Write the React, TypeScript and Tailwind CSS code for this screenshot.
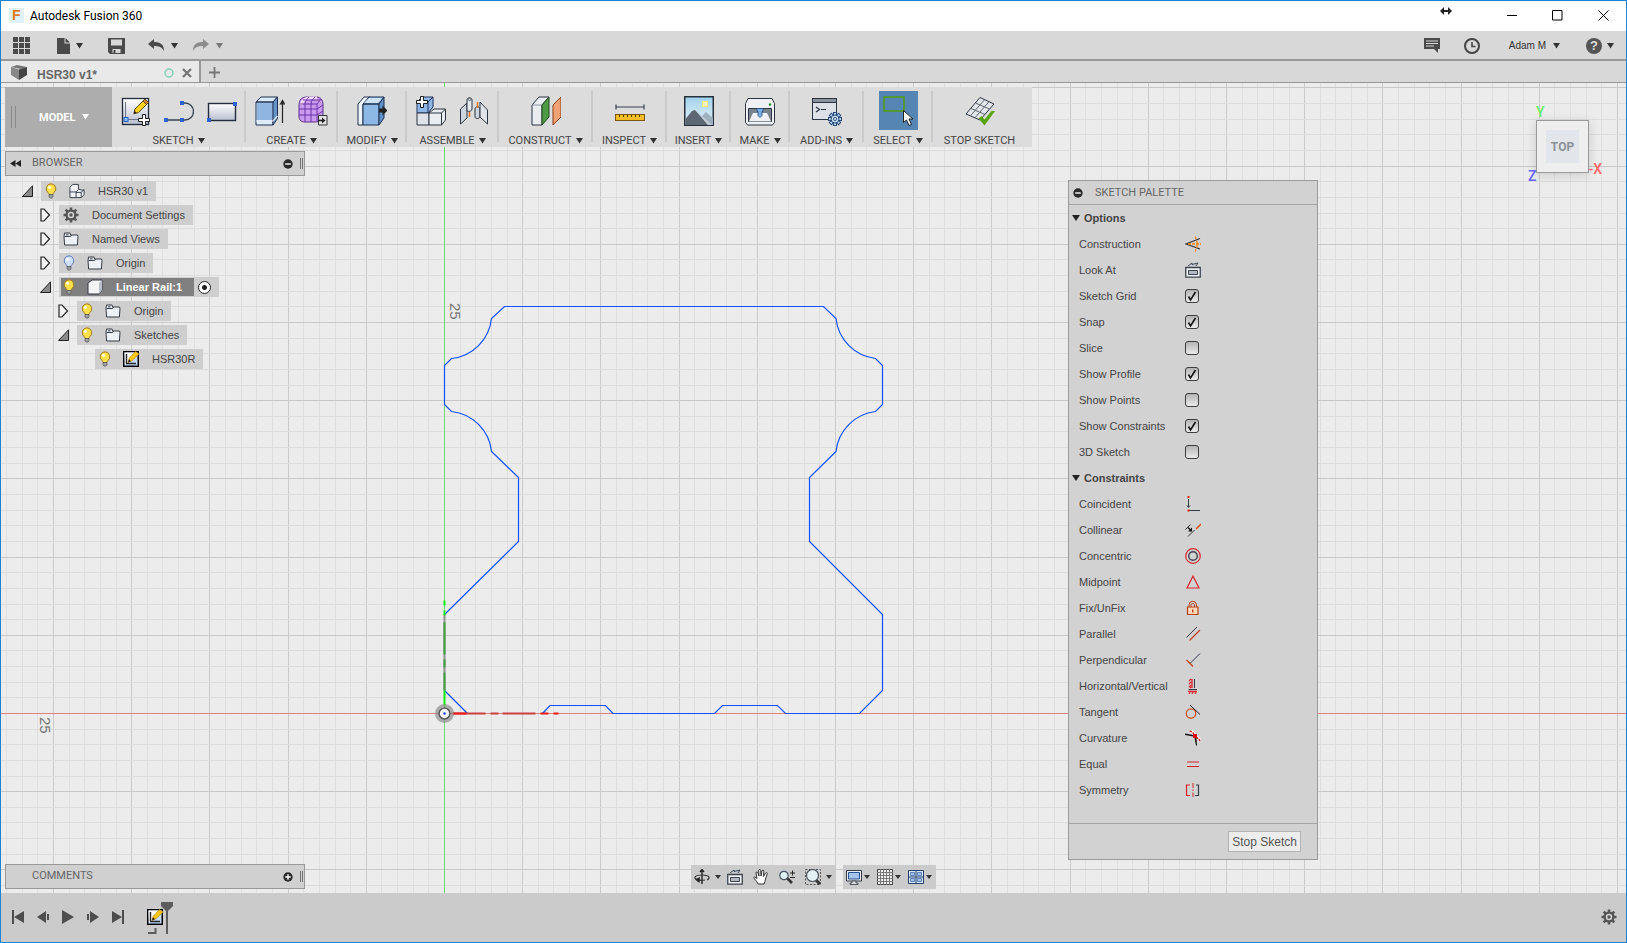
import { useState, type ReactNode } from "react";

const UI = "font-['Liberation_Sans',Arial,sans-serif]";
const CONDENSED = "font-['Roboto','Liberation_Sans',sans-serif]";

/* ---------- small shared glyphs ---------- */

function Caret({ className = "text-[#333]" }: { className?: string }) {
  return (
    <svg width="7" height="6" viewBox="0 0 7 6" className={className} aria-hidden="true">
      <path d="M0 0h7L3.5 5.5z" fill="currentColor" />
    </svg>
  );
}

function Bulb({ off = false }: { off?: boolean }) {
  return (
    <svg width="12" height="16" viewBox="0 0 12 16" aria-hidden="true">
      <path
        d="M6 .8a4.9 4.9 0 0 0-3 8.700c.8.700 1 1.200 1 2h4c0-.8.2-1.300 1-2A4.900 4.900 0 0 0 6 .8z"
        fill={off ? "#cfe0fb" : "#ffe04a"}
        stroke={off ? "#5f7fc0" : "#a87b1c"}
      />
      <circle cx="4.500" cy="4.300" r="1.600" fill="#fff" opacity=".85" />
      <path d="M4 11.500h4v2.300L7 15H5l-1-1.200z" fill="#9aa0a8" stroke="#555" strokeWidth=".7" />
    </svg>
  );
}

function Folder() {
  return (
    <svg width="16" height="14" viewBox="0 0 16 14" aria-hidden="true">
      <path d="M1 4.500 1.500 1h5.500l.7 2H14.500l.5 1.500-.6 8.500H1.600z" fill="#eef1f5" stroke="#333b47" strokeLinejoin="round" />
      <path d="M1.500 4.500h6L8.500 3M3 2.800h2.500" fill="none" stroke="#333b47" />
    </svg>
  );
}

function Gear({ size = 16 }: { size?: number }) {
  return (
    <svg width={size} height={size} viewBox="0 0 16 16" aria-hidden="true">
      <g stroke="#555" strokeWidth="2.600">
        <path d="M8 .5v15M.5 8h15M2.700 2.700l10.600 10.600M13.300 2.700 2.700 13.300" />
      </g>
      <circle cx="8" cy="8" r="5.600" fill="#555" />
      <circle cx="8" cy="8" r="3.200" fill="#d4d4d4" />
      <circle cx="8" cy="8" r="1.700" fill="#555" />
    </svg>
  );
}

function SketchFeature() {
  return (
    <svg width="16" height="16" viewBox="0 0 16 16" aria-hidden="true">
      <rect x=".75" y=".75" width="14.500" height="14.500" fill="#c4ddf8" stroke="#000" strokeWidth="1.500" />
      <path d="M1.500 1.500h13L2 14.500z" fill="#fff" />
      <path d="M3.500 3v9.500H13" fill="none" stroke="#222" strokeWidth="1.400" />
      <path d="m6 7.500 6.500-7L16 3 9 9.700 5 11.500z" fill="#ffc916" stroke="#b98412" strokeWidth=".7" />
      <path d="m5 11.500 1-3.200 2 2z" fill="#222" />
    </svg>
  );
}

function RoundSign({ plus = false }: { plus?: boolean }) {
  return (
    <svg width="10" height="10" viewBox="0 0 10 10" aria-hidden="true">
      <circle cx="5" cy="5" r="4.700" fill="#2b2b2b" />
      <path d={plus ? "M2.200 5h5.600M5 2.200v5.600" : "M2.200 5h5.600"} stroke="#fff" strokeWidth="1.400" />
    </svg>
  );
}

/* ---------- ribbon icons, 30 x 30 ---------- */

function Icon30({ children }: { children: ReactNode }) {
  return (
    <svg width="30" height="30" viewBox="0 0 30 30" fill="none" aria-hidden="true">
      {children}
    </svg>
  );
}

const CreateSketchIcon = (
  <Icon30>
    <rect x="1.500" y="2.500" width="26" height="26" fill="url(#steel)" stroke="#222c3a" strokeWidth="1.300" />
    <path d="M4.500 6v17.500H20" stroke="#6d7785" />
    <rect x="3" y="21.500" width="4" height="4" fill="#8fc0ff" stroke="#1f5fc4" />
    <path d="m14 13 9.500-9.500 3.500 3.500-9.500 9.500-4.700 1.300z" fill="#ffd21f" stroke="#5c4715" />
    <path d="m22 5 3.500 3.500L27.500 6.500 24 3z" fill="#d7873a" stroke="#5c4715" />
    <path d="m12.800 17.800.8-3 2.200 2.200z" fill="#222" />
    <path d="M21.500 18.500h3v4h4v3h-4v4h-3v-4h-4v-3h4z" fill="#fff" stroke="#1c1c1c" />
  </Icon30>
);

const PolylineIcon = (
  <Icon30>
    <path d="M2 24h16M17 7h4a8.500 8.500 0 0 1 0 17h-4" stroke="#39414d" strokeWidth="1.300" />
    <path d="M0 22h4v4H0zM16 22h4v4h-4zM16 5h4v4h-4z" fill="#2f62cf" />
  </Icon30>
);

const RectangleIcon = (
  <Icon30>
    <rect x="1.500" y="7.500" width="27" height="17" fill="url(#steel)" stroke="#222c3a" strokeWidth="1.400" />
    <path d="M0 22h4v4H0zM26 6h4v4h-4z" fill="#2f62cf" />
  </Icon30>
);

const ExtrudeIcon = (
  <Icon30>
    <path d="M1 6 6 1h16.500L18 6zM1 6h17v23H1z" fill="#dcebfa" stroke="#1f3050" strokeLinejoin="round" />
    <path d="M2 7h15.500v17H2z" fill="#8fb6e0" />
    <path d="M18 6l4.500-5v21.500L18 29z" fill="#6494c8" stroke="#1f3050" strokeLinejoin="round" />
    <path d="M1 25h17l4.500-5" stroke="#e8eef5" strokeWidth="1.200" />
    <path d="M27.500 27V5M25.500 8l2-3.500 2 3.500z" stroke="#222" strokeWidth="1.200" />
  </Icon30>
);

const FormIcon = (
  <Icon30>
    <path d="M1 10C1 3 4 1 9 1h9c5 0 7 3 7 8v9c0 5-3 8-8 8H7c-4 0-6-2-6-6z" fill="#c99af0" stroke="#5c2c90" />
    <path d="M3 9C5 3 8 2 13 2h6" stroke="#f1dcff" strokeWidth="3" />
    <path d="M1 13h18M1 19h18M2 8h17M7 8v18M13 8v18M19 8v17M7 8c0-3 2-5 4-7M13 8c0-3 2-5 4-7M19 8l4-5M19 13l6-4M19 19l6-4M5 4h17" stroke="#6a35a5" />
    <path d="M20.500 19.500h8.500v9.500h-8.500z" fill="#e4e4e4" stroke="#333" />
    <path d="M20 24.500h5" stroke="#222" strokeWidth="1.600" />
    <path d="m24 21.500 3.500 3-3.500 3z" fill="#222" />
  </Icon30>
);

const PressPullIcon = (
  <Icon30>
    <path d="M1 8 7 1h6L6 8v21H1z" fill="#edf3fa" stroke="#1f3050" strokeLinejoin="round" />
    <path d="M6 8l6-7h15l-5 7zM6 8h16v21H6z" fill="#8db7e4" stroke="#1f3050" strokeLinejoin="round" />
    <path d="m7 7 5-5h13l-4 5z" fill="#d0e3f7" />
    <path d="m22 8 5-7v21l-5 7z" fill="#5f90c6" stroke="#1f3050" strokeLinejoin="round" />
    <path d="M22 12.500h3.500v-3l5 5-5 5v-3H22z" fill="#222" />
  </Icon30>
);

const NewComponentIcon = (
  <Icon30>
    <path d="M1 6 6 1h11v10l-5 6H1z" fill="#8fb7e5" stroke="#1f3560" />
    <path d="M12 6v11M12 6l5-5" stroke="#1f3560" />
    <path d="M1 17h12v12H1z" fill="#dfe3e9" stroke="#2b3442" />
    <path d="m13 17 5-4h11.500v11l-4 5H13zM13 17h12.500v12M25.500 17l4-4" fill="#e9ecf1" stroke="#2b3442" />
    <path d="M4.500.5h3v4h4v3h-4v4h-3v-4h-4v-3h4z" fill="#fff" stroke="#1c1c1c" />
  </Icon30>
);

const JointIcon = (
  <Icon30>
    <path d="M1.500 13 8 7v15l-6.500 6z" fill="#cfd5de" stroke="#2b3442" strokeLinejoin="round" />
    <path d="M8 4c0-3 5-3 5 0v9c0 2-3 3-5 2z" fill="#e6eaef" stroke="#2b3442" />
    <circle cx="10.500" cy="3.500" r="1.200" fill="#fff" stroke="#2b3442" strokeWidth=".7" />
    <path d="M16 13c0-3 5-3 5 0v8c-1 2-5 2-5 0z" fill="#cfd5de" stroke="#2b3442" />
    <path d="m21 6 7.500 8v14L21 21z" fill="#dfe3ea" stroke="#2b3442" strokeLinejoin="round" />
    <path d="M10.500 16v5M18.500 6v6" stroke="#f07818" strokeWidth="1.600" />
  </Icon30>
);

const ConstructIcon = (
  <Icon30>
    <path d="m1 9 7-8h10l-7 8v20H1z" fill="#e8ebf0" stroke="#2b3442" strokeLinejoin="round" />
    <path d="M1 9h10" stroke="#9099a6" />
    <path d="m11 9 7-8v20l-7 8z" fill="#4f9a44" stroke="#1f4a1c" strokeLinejoin="round" />
    <path d="m22 9 8-8v20l-8 8z" fill="#f0a274" stroke="#8d3f16" strokeLinejoin="round" />
  </Icon30>
);

const InspectIcon = (
  <Icon30>
    <path d="M1 11h28M1 8.500v5M29 8.500v5" stroke="#39414d" strokeWidth="1.200" />
    <rect x=".5" y="18.500" width="29" height="6" fill="#f5bd2a" stroke="#7a5a12" />
    <path d="M4.500 19v2M8.500 19v2M12.500 19v2M16.500 19v2M20.500 19v2M24.500 19v2" stroke="#5c430d" />
  </Icon30>
);

const InsertIcon = (
  <Icon30>
    <rect x=".75" y=".75" width="28.500" height="28.500" fill="url(#sky)" stroke="#26303c" strokeWidth="1.500" />
    <path d="m14 24 8-8 7 6v7H12z" fill="#9eb0bf" />
    <path d="M1.500 23 8 15l3-1 4 4 9 11H1.500z" fill="#5d6674" />
    <path d="m11 14 13 15h4L16 18z" fill="#c3ccd6" />
    <rect x="18.500" y="5.500" width="5" height="5" fill="#fff6b8" stroke="#ffe98a" />
  </Icon30>
);

const MakeIcon = (
  <Icon30>
    <path d="M3 2.500h24l2.500 5v19l-2 2.500h-25L.5 26.500v-19z" fill="#eef0f3" stroke="#2b3442" strokeLinejoin="round" />
    <circle cx="25" cy="8.500" r="1.200" fill="#1c8a1c" />
    <path d="M3.500 12.500h23v13h-23z" fill="#7b838f" stroke="#2b3442" />
    <path d="m8 17-4 8.500h22L22 17z" fill="#eef0f3" />
    <path d="M12 12.500h6v3h-1v4l-2 2-2-2v-4h-1z" fill="#78aee8" stroke="#244c80" strokeWidth=".8" />
  </Icon30>
);

const AddInsIcon = (
  <Icon30>
    <rect x=".5" y="2.500" width="24" height="21" fill="#dce1e8" stroke="#2b3442" />
    <path d="M.5 2.500h24v4H.5z" fill="#8a929e" stroke="#2b3442" />
    <path d="m4 11 3.500 2.500L4 16M9 13.500h5" stroke="#2b3442" strokeWidth="1.200" />
    <g stroke="#27497a" strokeWidth="4">
      <path d="M23 16v14M16 23h14M18 18l10 10M28 18 18 28" />
    </g>
    <g stroke="#c4d9f2" strokeWidth="2">
      <path d="M23 17v12M17 23h12M18.700 18.700l8.600 8.600M27.300 18.700l-8.600 8.600" />
    </g>
    <circle cx="23" cy="23" r="4" fill="#c4d9f2" stroke="#27497a" />
    <circle cx="23" cy="23" r="1.500" fill="#fff" stroke="#27497a" />
  </Icon30>
);

const SelectIcon = (
  <Icon30>
    <rect x="1" y="1" width="20" height="14" stroke="#4f9d0c" strokeWidth="1.500" />
    <path d="M20.500 14.500v12l3-2.500 2.500 5.500 2.500-1-2.500-5.500h4z" fill="#f4f4f4" stroke="#222" />
  </Icon30>
);

const StopSketchIcon = (
  <Icon30>
    <path d="M15 1.500 29 8 15 24 1 18z" fill="#e3e6eb" stroke="#2b3442" strokeLinejoin="round" />
    <path d="m10.500 7 14 6M6 12.500l14 6M19.500 3.700l-14 16M24 5.700l-14 16" stroke="#5e6774" />
    <path d="m13.500 22.500 3-2.500 3 3.500 7-8.500h3.500L19.500 29.500z" fill="#59a30c" />
  </Icon30>
);

type RibbonGroup = { label: string; width: string; icons: ReactNode[]; menu?: boolean; active?: boolean };

const ribbon: RibbonGroup[] = [
  { label: "SKETCH", width: "w-[134px]", icons: [CreateSketchIcon, PolylineIcon, RectangleIcon] },
  { label: "CREATE", width: "w-[92px]", icons: [ExtrudeIcon, FormIcon] },
  { label: "MODIFY", width: "w-[69px]", icons: [PressPullIcon] },
  { label: "ASSEMBLE", width: "w-[92px]", icons: [NewComponentIcon, JointIcon] },
  { label: "CONSTRUCT", width: "w-[94px]", icons: [ConstructIcon] },
  { label: "INSPECT", width: "w-[74px]", icons: [InspectIcon] },
  { label: "INSERT", width: "w-[64px]", icons: [InsertIcon] },
  { label: "MAKE", width: "w-[59px]", icons: [MakeIcon] },
  { label: "ADD-INS", width: "w-[74px]", icons: [AddInsIcon] },
  { label: "SELECT", width: "w-[69px]", icons: [SelectIcon], active: true },
  { label: "STOP SKETCH", width: "w-[99px]", icons: [StopSketchIcon], menu: false },
];

function Ribbon() {
  return (
    <div className="flex h-[60px] w-fit bg-[#dcdcdc]">
      <button className={`flex w-[107px] items-center bg-[#adadad] pl-[6px] text-[11px] font-bold text-white ${CONDENSED}`}>
        <span className="h-[22px] w-[5px] border-x border-[#8a8a8a]" />
        <span className="ml-[23px] pt-[2px]">MODEL</span>
        <span className="ml-[6px]">
          <Caret className="text-white" />
        </span>
      </button>
      {ribbon.map((group, i) => (
        <div key={group.label} className={`flex ${group.width}`}>
          <div className={`flex flex-1 flex-col items-center ${group.menu === false ? "pr-[6px]" : "pl-[1px]"}`}>
            <div className="flex h-[47px] items-center gap-[13px]">
              {group.icons.map((icon, n) => (
                <button
                  key={n}
                  aria-label={group.label}
                  className={group.active ? "flex h-[39px] w-[39px] items-center justify-center bg-[#5586b3]" : ""}
                >
                  {icon}
                </button>
              ))}
            </div>
            <button className={`flex h-[13px] items-center gap-[4px] text-[11px] leading-[13px] text-[#444] ${CONDENSED}`}>
              {group.label}
              {group.menu !== false && <Caret />}
            </button>
          </div>
          {i < ribbon.length - 1 && <div className="mt-[4px] h-[51px] w-[2px] bg-[#cacaca]" />}
        </div>
      ))}
    </div>
  );
}

/* ---------- title, quick access and tab bars ---------- */

function TitleBar() {
  return (
    <header className="flex h-[30px] shrink-0 items-center bg-white pb-[2px] pl-[8px]">
      <svg width="15" height="15" viewBox="0 0 15 15" aria-hidden="true">
        <rect width="15" height="15" fill="#dff1f6" />
        <text x="3" y="12" fontSize="14" fontWeight="900" fill="#e07b1f" fontFamily="Liberation Sans">
          F
        </text>
      </svg>
      <h1 className={`ml-[6px] pt-[1px] text-[12px] text-black ${CONDENSED}`}>Autodesk Fusion 360</h1>
      <div className="ml-auto flex items-center pr-[17px]">
        <svg width="12" height="8" viewBox="0 0 12 8" className="mb-[8px]" aria-hidden="true">
          <path d="M0 4l4-4v3h4V0l4 4-4 4V5H4v3z" fill="#222" />
        </svg>
        <button aria-label="Minimize" className="ml-[55px]">
          <svg width="11" height="11" viewBox="0 0 11 11">
            <path d="M0 5.500h10" stroke="#000" />
          </svg>
        </button>
        <button aria-label="Maximize" className="ml-[34px]">
          <svg width="11" height="11" viewBox="0 0 11 11">
            <path d="M.5.5h9.500v9.500H.5z" fill="none" stroke="#000" />
          </svg>
        </button>
        <button aria-label="Close" className="ml-[35px]">
          <svg width="11" height="11" viewBox="0 0 11 11">
            <path d="m.5.500 10 10m0-10-10 10" stroke="#000" />
          </svg>
        </button>
      </div>
    </header>
  );
}

function QuickAccess() {
  return (
    <nav className="flex h-[30px] shrink-0 items-center border-b-2 border-[#989898] bg-[#d8d8d8] pl-[12px] pt-[1px] text-[#444]">
      <button aria-label="Data panel">
        <svg width="17" height="17" viewBox="0 0 17 17" fill="#4a4a4a">
          <path d="M0 0h5v5H0zM6 0h5v5H6zM12 0h5v5h-5zM0 6h5v5H0zM6 6h5v5H6zM12 6h5v5h-5zM0 12h5v5H0zM6 12h5v5H6zM12 12h5v5h-5z" />
        </svg>
      </button>
      <button aria-label="File" className="ml-[27px] flex items-center gap-[6px]">
        <svg width="13" height="16" viewBox="0 0 13 16" fill="#4a4a4a">
          <path d="M0 0h7.500v5.500H13V16H0zM8.500 0 13 4.500H8.500z" />
        </svg>
        <Caret />
      </button>
      <button aria-label="Save" className="ml-[25px]">
        <svg width="17" height="16" viewBox="0 0 17 16">
          <path d="M0 0h17v16H2l-2-2z" fill="#4a4a4a" />
          <path d="M3 1.500h11v6H3zM4.500 11h8v4h-8z" fill="#d8d8d8" />
          <path d="M5.500 12h2v3h-2z" fill="#4a4a4a" />
        </svg>
      </button>
      <button aria-label="Undo" className="ml-[23px] flex items-center gap-[7px]">
        <svg width="16" height="13" viewBox="0 0 16 13">
          <path d="M0 5 6 0v3c6 0 10 2 10 9-2-4-5-5-10-5v3z" fill="#4a4a4a" />
        </svg>
        <Caret />
      </button>
      <button aria-label="Redo" className="ml-[15px] flex items-center gap-[7px]">
        <svg width="16" height="13" viewBox="0 0 16 13">
          <path d="M16 5 10 0v3C4 3 0 5 0 12c2-4 5-5 10-5v3z" fill="#8c8c8c" />
        </svg>
        <Caret className="text-[#777]" />
      </button>

      <div className={`ml-auto flex items-center pr-[12px] ${UI}`}>
        <button aria-label="Comments">
          <svg width="16" height="15" viewBox="0 0 16 15">
            <path d="M0 0h16v11h-2v4l-4-4H0z" fill="#4a4a4a" />
            <path d="M2 3h12M2 5.500h12M2 8h8" stroke="#d8d8d8" strokeWidth="1.200" />
          </svg>
        </button>
        <button aria-label="Job status" className="ml-[24px]">
          <svg width="16" height="16" viewBox="0 0 16 16" fill="none" stroke="#444">
            <circle cx="8" cy="8" r="7" strokeWidth="2" />
            <path d="M8 4v4.500h3.500" strokeWidth="1.600" />
          </svg>
        </button>
        <button className="ml-[29px] flex items-center gap-[7px] text-[10px] text-[#333]">
          Adam M
          <Caret />
        </button>
        <button aria-label="Help" className="ml-[26px] flex items-center gap-[5px]">
          <span className="flex h-[16px] w-[16px] items-center justify-center rounded-full bg-[#555] text-[13px] font-bold text-[#ddd]">
            ?
          </span>
          <Caret />
        </button>
      </div>
    </nav>
  );
}

function TabBar() {
  return (
    <div className="flex h-[22px] shrink-0 border-b border-[#989898] bg-[#d8d8d8]">
      <div className={`flex w-[200px] items-center border-r-2 border-[#989898] bg-[#e9e9e9] pl-[10px] pr-[7px] pt-[2px] ${UI}`}>
        <svg width="16" height="15" viewBox="0 0 16 15" aria-hidden="true">
          <path d="M0 2 6 0l10 2-6 2z" fill="#777" />
          <path d="M0 2l8 2.500V15L0 10z" fill="#888" />
          <path d="M8 4.500 16 2v8l-8 5z" fill="#444" />
        </svg>
        <span className="ml-[10px] pt-[4px] text-[12px] leading-[14px] font-bold text-[#666]">HSR30 v1*</span>
        <svg width="10" height="10" viewBox="0 0 10 10" className="ml-auto" aria-hidden="true">
          <circle cx="5" cy="5" r="4" fill="none" stroke="#7fd0b4" strokeWidth="1.400" />
        </svg>
        <button aria-label="Close tab" className="ml-[8px]">
          <svg width="10" height="10" viewBox="0 0 10 10">
            <path d="m1 1 8 8m0-8L1 9" stroke="#777" strokeWidth="2.400" />
          </svg>
        </button>
      </div>
      <button aria-label="New tab" className="ml-[8px] pt-[2px]">
        <svg width="11" height="11" viewBox="0 0 11 11">
          <path d="M5.500 0v11M0 5.500h11" stroke="#777" strokeWidth="1.800" />
        </svg>
      </button>
    </div>
  );
}

/* ---------- drawing canvas ---------- */

// grid pitch of one unit; every fifth line is a major one
const PITCH = 15.640;
const ORIGIN = { x: 443, y: 630 };
const at = (origin: number, k: number) => Math.round(origin + k * PITCH) + 0.5;
const columns = Array.from({ length: 106 }, (_, i) => i - 28);
const rows = Array.from({ length: 58 }, (_, i) => i - 40);

function Canvas() {
  return (
    <svg className="absolute inset-0 h-full w-full" aria-label="Sketch canvas">
      <defs>
        <linearGradient id="steel" x1="0" y1="0" x2="0" y2="1">
          <stop offset="0" stopColor="#fff" />
          <stop offset="1" stopColor="#b9bfd0" />
        </linearGradient>
        <linearGradient id="sky" x1="0" y1="0" x2="0" y2="1">
          <stop offset="0" stopColor="#9fd0ec" />
          <stop offset="1" stopColor="#eaf5fa" />
        </linearGradient>
      </defs>
      <rect width="100%" height="100%" fill="#ececec" />
      {columns.map((k) => (
        <line key={k} x1={at(ORIGIN.x, k)} x2={at(ORIGIN.x, k)} y1="0" y2="100%" stroke={k % 5 ? "#dfdfdf" : "#cacaca"} />
      ))}
      {rows.map((k) => (
        <line key={k} y1={at(ORIGIN.y, k)} y2={at(ORIGIN.y, k)} x1="0" x2="100%" stroke={k % 5 ? "#dddddd" : "#c8c8c8"} />
      ))}
      <line x1="0" x2="100%" y1="630.5" y2="630.5" stroke="#e08080" />
      <line x1="443.500" x2="443.500" y1="0" y2="100%" stroke="#6fdc6f" />

      <g fill="#777" fontSize="15" fontFamily="Liberation Sans">
        <text transform="translate(449 220) rotate(90)">25</text>
        <text transform="translate(39 634) rotate(90)">25</text>
      </g>

      <g transform="translate(443.500 630.500)" fill="none">
        <path
          d="M98 0 105.500-8H161l7.500 8H270l8-8h55l8 8h74l23-23v-76l-73-73v-64l26.500-26A45 45 0 0 1 431-302l7-7v-39l-7-7A45 45 0 0 1 391.500-395L379-407H60L47-395A45 45 0 0 1 7-355l-7 7v39l7 7A45 45 0 0 1 47-262l27 26v64L0-99M0-23 23 0"
          stroke="#0d50ff"
          strokeWidth="1.200"
        />
        <path d="M0-23v-76" stroke="#8a938a" strokeWidth="2" />
        <path d="M0-23v-18m0-5v-8m0-5v-32" stroke="#3f9f3f" strokeWidth="2" />
        <path d="M0-8v-15M0-98v-5m0-5v-5" stroke="#0cf00c" strokeWidth="2" />
        <path d="M8 0h33m5 0h8m4 0h33" stroke="#c84040" strokeWidth="2" />
        <path d="M8 0h14m74 0h8m5 0h5" stroke="#f01818" strokeWidth="2" />
        <circle r="8" stroke="#888" strokeOpacity=".65" strokeWidth="3" />
        <circle r="5.500" fill="#f4f4f4" stroke="#555" strokeWidth="1.600" />
        <circle r="1.200" fill="#1a3cf5" />
      </g>
    </svg>
  );
}

function ViewCube() {
  return (
    <div className={`absolute right-[37px] top-[37px] h-[53px] w-[53px] text-[14px] leading-[16px] ${CONDENSED}`}>
      <button className="flex h-full w-full items-center justify-center border border-[#9a9a9a] bg-[#eeeeee] shadow-[0_2px_10px_rgba(0,0,0,0.15)]">
        <span className="flex h-[33px] w-[33px] items-center justify-center bg-[#e2e5e9] text-[12px] font-bold text-[#8c9196]">TOP</span>
      </button>
      <span className="absolute -top-[16px] left-0 font-medium text-[#66f066]">Y</span>
      <span className="absolute -right-[13px] top-[41px] font-medium text-[#f66]">-X</span>
      <span className="absolute -left-[8px] top-[48px] font-medium text-[#66f]">Z</span>
    </div>
  );
}

/* ---------- browser tree ---------- */

function Expander({ open }: { open: boolean }) {
  return (
    <button aria-label={open ? "Collapse" : "Expand"} className="flex w-[20px] shrink-0 justify-start pl-[1px]">
      {open ? (
        <svg width="12" height="12" viewBox="0 0 12 12">
          <path d="M10.500 .8v10.700H.5z" fill="#8a8a8a" stroke="#222" />
        </svg>
      ) : (
        <svg width="12" height="14" viewBox="0 0 12 14">
          <path d="M1 1h3l5.500 6L4 13H1z" fill="#f4f4f4" stroke="#222" strokeWidth="1.200" />
        </svg>
      )}
    </button>
  );
}

const AssemblyIcon = (
  <svg width="17" height="16" viewBox="0 0 17 16" aria-hidden="true">
    <path d="m1 4 3-3h6v5l3 1h3v5l-3 3H1z" fill="#f0f2f5" stroke="#333b47" strokeLinejoin="round" />
    <path d="M1 9h6.500v6M7.500 9 10 6.500M7.500 9.500H13V15M13 9.500l3-3" fill="none" stroke="#333b47" />
  </svg>
);

const BodyIcon = (
  <svg width="16" height="16" viewBox="0 0 16 16" aria-hidden="true">
    <path d="m1 4 4-3h10v10l-3 4H1z" fill="#f2f4f6" stroke="#333b47" strokeLinejoin="round" />
    <path d="M12 15V4l3-3v10z" fill="#b9c0ca" />
  </svg>
);

type Node = {
  label: string;
  indent: string;
  open?: boolean;
  bulb?: "on" | "off";
  icon: ReactNode;
  active?: boolean;
};

const tree: Node[] = [
  { label: "HSR30 v1", indent: "pl-[16px]", open: true, bulb: "on", icon: AssemblyIcon },
  { label: "Document Settings", indent: "pl-[34px]", open: false, icon: <Gear /> },
  { label: "Named Views", indent: "pl-[34px]", open: false, icon: <Folder /> },
  { label: "Origin", indent: "pl-[34px]", open: false, bulb: "off", icon: <Folder /> },
  { label: "Linear Rail:1", indent: "pl-[34px]", open: true, bulb: "on", icon: BodyIcon, active: true },
  { label: "Origin", indent: "pl-[52px]", open: false, bulb: "on", icon: <Folder /> },
  { label: "Sketches", indent: "pl-[52px]", open: true, bulb: "on", icon: <Folder /> },
  { label: "HSR30R", indent: "pl-[90px]", bulb: "on", icon: <SketchFeature /> },
];

function TreeRow({ node }: { node: Node }) {
  return (
    <li className={`flex h-[20px] items-center ${node.indent}`}>
      {node.open !== undefined && <Expander open={node.open} />}
      <div className={`flex h-full items-center bg-[#cecece] ${node.active ? "pl-[2px]" : ""}`}>
        <button
          className={`flex items-center text-[11px] ${
            node.active ? "h-[18px] bg-[#808080] pl-[2px] pr-[12px] font-bold text-white" : "h-full pl-[4px] pr-[8px] text-[#444]"
          }`}
        >
          {node.bulb && (
            <span className="mr-[12px]">
              <Bulb off={node.bulb === "off"} />
            </span>
          )}
          <span className="mr-[13px] flex w-[16px] justify-center">{node.icon}</span>
          {node.label}
        </button>
        {node.active && (
          <label className="flex w-[25px] items-center pl-[4px]">
            <input
              type="radio"
              defaultChecked
              aria-label="Activate component"
              className="h-[13px] w-[13px] appearance-none rounded-full border border-[#222] bg-[radial-gradient(circle,#222_2px,#fff_3px)]"
            />
          </label>
        )}
      </div>
    </li>
  );
}

function PanelBar({ title, plus = false }: { title: string; plus?: boolean }) {
  return (
    <div className="flex h-[25px] w-[300px] items-center border border-[#999] bg-[#d0d0d0] pl-[4px] pr-[1px]">
      <span className="w-[22px]">
        {!plus && (
          <button aria-label="Hide browser" className="block">
            <svg width="11" height="7" viewBox="0 0 11 7">
              <path d="M5.500 0v7L0 3.500zM11 0v7L5.500 3.500z" fill="#222" />
            </svg>
          </button>
        )}
      </span>
      <h2 className={`text-[11px] text-[#666] ${CONDENSED}`}>{title}</h2>
      <button aria-label={plus ? "Expand comments" : "Collapse browser"} className="ml-auto">
        <RoundSign plus={plus} />
      </button>
      <span className="ml-[7px] h-[11px] w-[3px] border-x border-[#777]" />
    </div>
  );
}

/* ---------- sketch palette ---------- */

function Icon16({ children }: { children: ReactNode }) {
  return (
    <svg width="16" height="16" viewBox="0 0 16 16" fill="none" aria-hidden="true">
      {children}
    </svg>
  );
}

const ConstructionIcon = (
  <Icon16>
    <path d="M15 2.500 1 8l14 5" stroke="#333" strokeWidth="1.200" />
    <path d="M3 8h13" stroke="#f57c00" strokeWidth="1.300" strokeDasharray="3 1" />
    <path d="M10 .500c3 5 3 10 0 15" stroke="#f57c00" strokeWidth="1.200" strokeDasharray="3 1.500" />
  </Icon16>
);

const LookAtIcon = (
  <Icon16>
    <path d="M.75 5.500h14.500v9.700H.75z" fill="#f2f4f7" stroke="#3a434f" strokeWidth="1.300" />
    <path d="M3.500 8.500h9v4h-9z" fill="#b4bac4" stroke="#3a434f" />
    <path d="m3 4 4-3v1.500L13 1l-2 3" fill="#c9ced6" stroke="#3a434f" />
  </Icon16>
);

const constraints: { label: string; icon: ReactNode }[] = [
  {
    label: "Coincident",
    icon: (
      <Icon16>
        <path d="M3.500 3v8M3.500 14.500H15M2 9.500l1.500 2 1.500-2" stroke="#333b47" />
        <path d="M2.500 0h2v2h-2zM2.500 13.500h2v2h-2z" fill="#e8240c" />
      </Icon16>
    ),
  },
  {
    label: "Collinear",
    icon: (
      <Icon16>
        <path d="m.5 7.500 5-5M3 14.500l6.500-6.500" stroke="#333" />
        <path d="m11 7 5-5" stroke="#d84315" strokeWidth="1.300" />
        <path d="m3 5.500 3 3" stroke="#111" strokeWidth="1.200" />
        <path d="M7 5.500v4H3z" fill="#111" />
      </Icon16>
    ),
  },
  {
    label: "Concentric",
    icon: (
      <Icon16>
        <circle cx="8" cy="8" r="7.300" stroke="#d8222a" strokeWidth="1.200" />
        <circle cx="8" cy="8" r="4.300" stroke="#3a434f" strokeWidth="1.400" />
      </Icon16>
    ),
  },
  { label: "Midpoint", icon: <Icon16><path d="m8 2 6 12H2z" stroke="#d8222a" strokeWidth="1.200" /></Icon16> },
  {
    label: "Fix/UnFix",
    icon: (
      <Icon16>
        <path d="M4 7V5a3.500 3.500 0 0 1 7.500 0v2M6 7V5c0-2 3.500-2 3.500 0v2" stroke="#b5400f" />
        <path d="M2.500 7h10.500v7.500H2.500z" fill="#fbd6b8" stroke="#b5400f" strokeWidth="1.200" />
        <path d="M7.700 9.500v3" stroke="#b5400f" strokeWidth="1.300" />
      </Icon16>
    ),
  },
  {
    label: "Parallel",
    icon: (
      <Icon16>
        <path d="M1.500 11.500 12 1" stroke="#333b47" />
        <path d="M4.500 14.500 15 4" stroke="#c8401a" strokeWidth="1.200" />
      </Icon16>
    ),
  },
  {
    label: "Perpendicular",
    icon: (
      <Icon16>
        <path d="m5 11.500 10-10" stroke="#333b47" />
        <path d="m1.500 8 6.500 6.500" stroke="#c8401a" strokeWidth="1.200" />
      </Icon16>
    ),
  },
  {
    label: "Horizontal/Vertical",
    icon: (
      <Icon16>
        <path d="M9.500 1v9M3.500 11.500H12" stroke="#333b47" />
        <path d="M7 1v9M3 13.500h9M4 3l2-2M4 6l2-2M4 9l2-2M5 10l1-1M4 16l1-1.500M7 16l1-1.500M10 16l1-1.500" stroke="#e0202a" strokeWidth="1.300" />
      </Icon16>
    ),
  },
  {
    label: "Tangent",
    icon: (
      <Icon16>
        <circle cx="6" cy="9.500" r="4.700" stroke="#c8501a" strokeWidth="1.300" />
        <path d="m5 1 10 9.500" stroke="#222" />
      </Icon16>
    ),
  },
  {
    label: "Curvature",
    icon: (
      <Icon16>
        <path d="M4 .500c3 .5 5 3 6 5M10 6.500c3 .5 4 2 5.500 4.500" stroke="#fff" strokeWidth="3" />
        <path d="M4.500 1c2.500 .5 4 2 5 4.500M11 7.500c2 .5 3 1.500 4 3.500" stroke="#d01010" strokeWidth="1.500" strokeDasharray="2.500 1" />
        <path d="M0 3.500 8.500 5v1.500L0 5zM9.500 8l2 .5.5 7h-1z" fill="#111" />
        <path d="M8 4h4v4H8z" fill="#e00000" />
      </Icon16>
    ),
  },
  { label: "Equal", icon: <Icon16><path d="M2 6h12M2 10.500h12" stroke="#d8222a" strokeWidth="1.200" /></Icon16> },
  {
    label: "Symmetry",
    icon: (
      <Icon16>
        <path d="M5 3H1.500v10.500H5" stroke="#d8222a" strokeWidth="1.200" />
        <path d="M11 3h2.500v10.500H10" stroke="#333b47" strokeWidth="1.200" />
        <path d="M8 1v14" stroke="#d8222a" strokeDasharray="5 1.500 1.500 1.500" />
      </Icon16>
    ),
  },
];

const options = [
  { label: "Sketch Grid", on: true },
  { label: "Snap", on: true },
  { label: "Slice", on: false },
  { label: "Show Profile", on: true },
  { label: "Show Points", on: false },
  { label: "Show Constraints", on: true },
  { label: "3D Sketch", on: false },
];

function OptionRow({ label, on }: { label: string; on: boolean }) {
  const [checked, setChecked] = useState(on);
  return (
    <label className="flex h-[26px] items-center pl-[10px]">
      <span className="w-[106px]">{label}</span>
      <span className="relative h-[14px] w-[14px]">
        <input
          type="checkbox"
          checked={checked}
          onChange={(e) => setChecked(e.target.checked)}
          className="block h-[14px] w-[14px] appearance-none rounded-[3px] border border-[#3c3c3c] bg-linear-to-b from-[#b4b4b4] to-[#ececec]"
        />
        {checked && (
          <svg width="14" height="14" viewBox="0 0 14 14" className="pointer-events-none absolute inset-0">
            <path d="m3.500 7.500 2 3.500 5-8" fill="none" stroke="#111" strokeWidth="1.600" />
          </svg>
        )}
      </span>
    </label>
  );
}

function CommandRow({ label, icon }: { label: string; icon: ReactNode }) {
  return (
    <button className="flex h-[26px] w-full items-center pl-[10px] text-left">
      <span className="w-[106px]">{label}</span>
      {icon}
    </button>
  );
}

function SectionTitle({ children }: { children: ReactNode }) {
  return (
    <h3 className="flex h-[26px] items-center gap-[4px] pl-[3px] font-bold">
      <svg width="8" height="6" viewBox="0 0 8 6" aria-hidden="true">
        <path d="M0 0h8L4 6z" fill="#222" />
      </svg>
      {children}
    </h3>
  );
}

function SketchPalette() {
  return (
    <aside className={`absolute right-[308px] top-[97px] w-[250px] border border-[#9a9a9a] bg-[#d2d2d2] text-[11px] text-[#444] ${UI}`}>
      <div className={`flex h-[24px] items-center gap-[12px] border-b border-[#a4a4a4] pl-[4px] pt-[1px] text-[#666] ${CONDENSED}`}>
        <RoundSign />
        <h2>SKETCH PALETTE</h2>
      </div>
      <SectionTitle>Options</SectionTitle>
      <CommandRow label="Construction" icon={ConstructionIcon} />
      <CommandRow label="Look At" icon={LookAtIcon} />
      {options.map((option) => (
        <OptionRow key={option.label} {...option} />
      ))}
      <SectionTitle>Constraints</SectionTitle>
      {constraints.map((constraint) => (
        <CommandRow key={constraint.label} {...constraint} />
      ))}
      <div className="mt-[20px] flex h-[36px] items-center justify-end border-t border-[#a4a4a4] pr-[16px]">
        <button className="h-[21px] border border-[#b4b4b4] bg-[#ededed] px-[3px] text-[12px] text-[#555]">Stop Sketch</button>
      </div>
    </aside>
  );
}

/* ---------- navigation bar ---------- */

const OrbitIcon = (
  <Icon16>
    <path d="M8 1v14M6 3l2-2.500L10 3" stroke="#222" strokeWidth="1.400" />
    <path d="M13 11c4-2 2-5-5-5s-9 3-5 4.500c1.500.700 5 1 8 .5" stroke="#333" strokeWidth="1.200" />
    <path d="m6 8-5 2.500L5.500 14z" fill="#222" />
  </Icon16>
);

const HandIcon = (
  <Icon16>
    <path
      d="M5 15C4 12 1 10 .7 8.500c.5-1 2-.5 3.300 1L3 4c0-1.500 1.700-1.500 2 0l1 3-.3-5.500c0-1.300 2-1.300 2 0L8 7l1-5c.3-1.300 2-1 1.800.3L10.500 7.500l2-3.500c.7-1 2.200-.3 1.700 1L12.500 10c0 2-1 3-1.500 5z"
      fill="#fff"
      stroke="#333"
    />
  </Icon16>
);

const ZoomIcon = (
  <Icon16>
    <path d="m8 9 5 5" stroke="#333" strokeWidth="2.600" />
    <circle cx="5" cy="6.500" r="4.200" fill="#dff1f5" stroke="#4a5462" strokeWidth="1.200" />
    <path d="M11 4h5M13.500 1.500v5M11 8.500h5" stroke="#222" />
  </Icon16>
);

const FitIcon = (
  <Icon16>
    <path d="M.5.500h15v15H.5z" stroke="#555" strokeDasharray="2 1.500" />
    <path d="m10 10 5 5" stroke="#333" strokeWidth="3" />
    <circle cx="7.500" cy="6.500" r="6" fill="#e4f2f5" stroke="#4a5462" strokeWidth="1.200" />
  </Icon16>
);

const DisplayIcon = (
  <Icon16>
    <path d="M.5 1.500h15v10.500H.5z" fill="#eee" stroke="#333b47" />
    <path d="M2.500 3.500h11v6.500h-11z" fill="#a4c4ee" stroke="#2b5391" />
    <path d="M6 12h4v2h2v1.500H4V14h2z" fill="#ddd" stroke="#333b47" strokeWidth=".8" />
  </Icon16>
);

const GridIcon = (
  <Icon16>
    <path d="M.5.500h15v15H.5z" fill="#f0f0f0" stroke="#444" />
    <path d="M3.500 0v16M6.500 0v16M9.500 0v16M12.500 0v16M0 3.500h16M0 6.500h16M0 9.500h16M0 12.500h16" stroke="#777" />
  </Icon16>
);

const ViewportIcon = (
  <Icon16>
    <path d="M.5 1.500h15v13H.5z" fill="#dce7f5" stroke="#23406e" />
    <path d="M2.500 3.500h4v3h-4zM9.500 3.500h4v3h-4zM2.500 9.500h4v3h-4zM9.500 9.500h4v3h-4z" fill="#a4c4ee" stroke="#5d82b8" />
    <path d="M8 1.500v13M.5 8h15" stroke="#23406e" />
  </Icon16>
);

type NavButtonProps = { label: string; width?: string; gap?: string; menu?: boolean; children: ReactNode };

function NavButton({ label, width = "w-[26px]", gap = "gap-[5px]", menu = false, children }: NavButtonProps) {
  return (
    <button aria-label={label} className={`flex shrink-0 items-center ${gap} ${width}`}>
      {children}
      {menu && (
        <svg width="6" height="4" viewBox="0 0 6 4" className="shrink-0">
          <path d="M0 0h6L3 4z" fill="#333" />
        </svg>
      )}
    </button>
  );
}

function NavigationBar() {
  return (
    <div className="absolute inset-x-0 bottom-[4px] flex justify-center gap-[7px]">
      <div className="flex h-[24px] w-[145px] items-center bg-[#cbcbcb] pl-[3px]">
        <NavButton label="Orbit" width="w-[33px]" menu>{OrbitIcon}</NavButton>
        <NavButton label="Look at">{LookAtIcon}</NavButton>
        <NavButton label="Pan">{HandIcon}</NavButton>
        <NavButton label="Zoom">{ZoomIcon}</NavButton>
        <NavButton label="Fit" width="w-[31px]" menu>{FitIcon}</NavButton>
      </div>
      <div className="flex h-[24px] w-[93px] items-center bg-[#cbcbcb] pl-[3px]">
        <NavButton label="Display settings" width="w-[31px]" gap="gap-[2px]" menu>{DisplayIcon}</NavButton>
        <NavButton label="Grid and snaps" width="w-[31px]" gap="gap-[2px]" menu>{GridIcon}</NavButton>
        <NavButton label="Viewports" gap="gap-[2px]" menu>{ViewportIcon}</NavButton>
      </div>
    </div>
  );
}

/* ---------- timeline ---------- */

const playback = [
  { label: "Go to start", d: "M0 0h2v14H0zM12 1v12L2 7z" },
  { label: "Step back", d: "M9 1v12L0 7zM10 4h2v6h-2z" },
  { label: "Play", d: "M0 0v14l12-7z" },
  { label: "Step forward", d: "M0 4h2v6H0zM3 1v12l9-6z" },
  { label: "Go to end", d: "M0 1v12l10-6zM10 0h2v14h-2z" },
];

function Timeline() {
  return (
    <footer className="flex h-[49px] shrink-0 items-center bg-[#cbcbcb] pb-[2px] pl-[11px] pr-[9px]">
      <div className="flex gap-[13px]">
        {playback.map((control) => (
          <button key={control.label} aria-label={control.label}>
            <svg width="12" height="14" viewBox="0 0 12 14">
              <path d={control.d} fill="#4d4d4d" />
            </svg>
          </button>
        ))}
      </div>
      <div className="relative ml-[23px] h-[30px] w-[27px]">
        <button aria-label="HSR30R sketch" className="mt-[7px] block">
          <SketchFeature />
        </button>
        <svg width="27" height="32" viewBox="0 0 27 32" className="pointer-events-none absolute left-0 top-0">
          <path d="M14 0h12v4l-5 5h-2l-5-5z" fill="#5c5c5c" />
          <path d="M20 8v24" stroke="#5c5c5c" strokeWidth="2" />
          <path d="M1 31h7.500v-5" fill="none" stroke="#5c5c5c" strokeWidth="2" />
        </svg>
      </div>
      <button aria-label="Timeline settings" className="ml-auto">
        <Gear />
      </button>
    </footer>
  );
}

export default function App() {
  return (
    <div className={`flex h-screen flex-col overflow-hidden border border-[#1883d7] ${UI}`}>
      <TitleBar />
      <QuickAccess />
      <TabBar />
      <main className="relative flex min-h-0 flex-1 flex-col overflow-hidden">
        <Canvas />
        <div className="relative flex flex-1 flex-col pb-[4px] pl-[4px] pt-[4px]">
          <Ribbon />
          <div className="mt-[4px]">
            <PanelBar title="BROWSER" />
          </div>
          <ul className="mt-[5px] flex flex-col gap-[4px]">
            {tree.map((node, i) => (
              <TreeRow key={i} node={node} />
            ))}
          </ul>
          <div className="mt-auto">
            <PanelBar title="COMMENTS" plus />
          </div>
        </div>
        <SketchPalette />
        <ViewCube />
        <NavigationBar />
      </main>
      <Timeline />
    </div>
  );
}
